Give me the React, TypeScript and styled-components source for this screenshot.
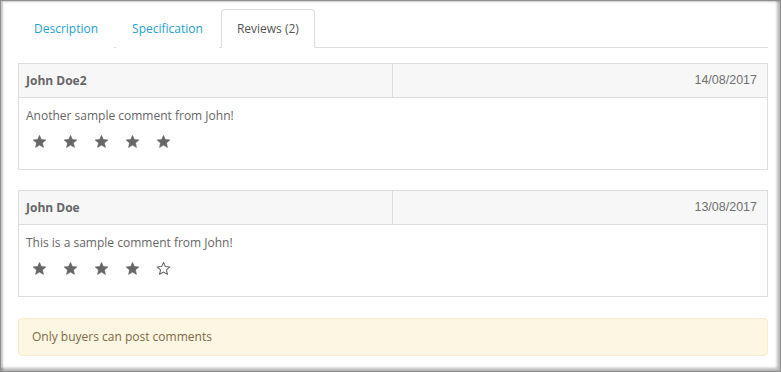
import React from 'react';
import styled, { createGlobalStyle } from 'styled-components';

const GlobalStyle = createGlobalStyle`
    html, body {
        margin: 0;
        padding: 0;
        background: #fff;
    }
    body {
        font-family: 'Open Sans', 'Liberation Sans', sans-serif;
        font-size: 12px;
        color: #666;
    }
`

type Review = {
    author: string;
    date: string;
    text: string;
    rating: number;
}

const reviews: Review[] = [
    { author: 'John Doe2', date: '14/08/2017', text: 'Another sample comment from John!', rating: 5 },
    { author: 'John Doe', date: '13/08/2017', text: 'This is a sample comment from John!', rating: 4 },
]

function Star({ filled }: { filled: boolean }) {
    return (
        <StarBox>
            <svg width="15" height="15" viewBox="0 0 24 24">
                <path
                    d="M12 2.2l2.95 6.6 7.2.7-5.45 4.8 1.6 7.1L12 17.7l-6.3 3.7 1.6-7.1L1.85 9.5l7.2-.7z"
                    fill={filled ? '#666' : 'none'}
                    stroke="#666"
                    strokeWidth={filled ? 1 : 1.7}
                    strokeLinejoin="round"
                />
            </svg>
        </StarBox>
    )
}

function ReviewTable({ review }: { review: Review }) {
    return (
        <Table>
            <HeadRow>
                <Author>{review.author}</Author>
                <DateCell>{review.date}</DateCell>
            </HeadRow>
            <Body>
                <Comment>{review.text}</Comment>
                <Stars>
                    {[1, 2, 3, 4, 5].map(i => (
                        <Star key={i} filled={i <= review.rating} />
                    ))}
                </Stars>
            </Body>
        </Table>
    )
}

function App() {
    return (
        <>
        <GlobalStyle />
        <Frame>
            <Tabs>
                <Tab>Description</Tab>
                <Tab>Specification</Tab>
                <Tab active>Reviews (2)</Tab>
            </Tabs>
            <Reviews>
                {reviews.map(r => (
                    <ReviewTable key={r.author} review={r} />
                ))}
            </Reviews>
            <Alert>Only buyers can post comments</Alert>
        </Frame>
        </>
    )
}

const Frame = styled.div`
    box-sizing: border-box;
    width: 781px;
    height: 372px;
    padding: 8px 12px 0 17px;
    border: 1px solid #8e8e8e;
    box-shadow: inset 2px 1px 2px rgba(0, 0, 0, 0.22), inset -3px -3px 3px rgba(0, 0, 0, 0.28);
    overflow: hidden;
`

const Tabs = styled.div`
    display: flex;
    border-bottom: 1px solid #ddd;
    margin-bottom: 15px;
`

const Tab = styled.div<{ active?: boolean }>`
    height: 37px;
    line-height: 37px;
    padding: 0 15px;
    margin-right: 2px;
    margin-bottom: -1px;
    font-size: 12px;
    border: 1px solid ${props => props.active ? '#ddd' : 'transparent'};
    border-bottom-color: ${props => props.active ? '#fff' : 'transparent'};
    border-radius: 4px 4px 0 0;
    background: #fff;
    color: ${props => props.active ? '#555' : '#23a1d1'};
    cursor: pointer;
`

const Reviews = styled.div`
    display: flex;
    flex-direction: column;
    gap: 20px;
`

const Table = styled.div`
    border: 1px solid #ddd;
`

const HeadRow = styled.div`
    display: grid;
    grid-template-columns: 1fr 1fr;
    background: #f7f7f7;
    border-bottom: 1px solid #ddd;
`

const Author = styled.div`
    padding: 8px 7px;
    line-height: 17px;
    font-weight: bold;
    color: #666;
    border-right: 1px solid #ddd;
`

const DateCell = styled.div`
    padding: 8px 10px;
    line-height: 17px;
    text-align: right;
    font-family: 'Liberation Sans', Arial, sans-serif;
    font-size: 12.5px;
    color: #707070;
`

const Body = styled.div`
    padding: 9px 7px 18px 7px;
`

const Comment = styled.div`
    line-height: 18px;
`

const Stars = styled.div`
    display: flex;
    gap: 5px;
    margin-top: 6px;
`

const StarBox = styled.span`
    display: flex;
    align-items: center;
    justify-content: center;
    width: 26px;
    height: 20px;
`

const Alert = styled.div`
    margin-top: 21px;
    padding: 9px 13px;
    line-height: 18px;
    background: #fcf6e2;
    border: 1px solid #faebcc;
    border-radius: 4px;
    color: #7d6a48;
`

export default App;
